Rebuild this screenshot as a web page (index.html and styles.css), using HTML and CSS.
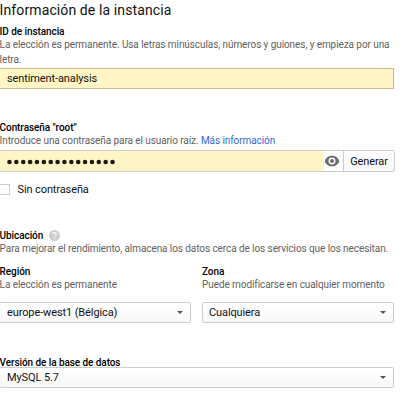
FILE: index.html
```
<!DOCTYPE html>
<html lang="es">
<head>
<meta charset="utf-8">
<title>Información de la instancia</title>
<link rel="stylesheet" href="styles.css">
</head>
<body>
<form class="form">
  <h1 class="title"><span>Información de la instancia</span></h1>

  <section class="field field-id">
    <div class="label">ID de instancia</div>
    <p class="help">La elección es permanente. Usa letras minúsculas, números y guiones, y empieza por una<br>letra.</p>
    <div class="input input-id"><span>sentiment-analysis</span></div>
  </section>

  <section class="field field-password">
    <div class="label label-password">Contraseña "root"</div>
    <p class="help help-password">Introduce una contraseña para el usuario raíz. <a class="link">Más información</a></p>
    <div class="password">
      <div class="password-value">
        <svg class="dots" width="110" height="6" viewBox="0 0 110 6"><path d="M2.5 3H109" fill="none" stroke="#211a12" stroke-width="4.6" stroke-linecap="round" stroke-dasharray="0 6.87"/></svg>
      </div>
      <div class="reveal">
        <svg width="16" height="16" viewBox="0 0 24 24"><path fill="#6b6b6b" d="M12 4C6.500 4 2.500 7.200 1 12c1.500 4.800 5.500 8 11 8s9.500-3.200 11-8c-1.500-4.800-5.500-8-11-8zm0 13.200a5.200 5.200 0 1 1 0-10.400 5.200 5.200 0 0 1 0 10.400zm0-8.200a3 3 0 1 0 0 6 3 3 0 0 0 0-6z"/></svg>
      </div>
      <div class="generate"><span>Generar</span></div>
    </div>
    <div class="check"><span class="box"></span><span class="check-text">Sin contraseña</span></div>
  </section>

  <section class="field field-location">
    <div class="label label-location">Ubicación
      <svg width="11" height="11" viewBox="0 0 11 11"><circle cx="5.500" cy="5.500" r="5.500" fill="#ccc"/><path d="M3.800 4.300C3.800 2 7.200 2.100 7.200 4.200 7.200 5.400 5.500 5.400 5.500 6.800M5.500 7.700V8.900" fill="none" stroke="#fff" stroke-width="1.200"/></svg>
    </div>
    <p class="help help-location">Para mejorar el rendimiento, almacena los datos cerca de los servicios que los necesitan.</p>
    <div class="columns">
      <div class="column">
        <div class="label">Región</div>
        <p class="help">La elección es permanente</p>
        <div class="select"><span>europe-west1 (Bélgica)</span><i class="arrow"></i></div>
      </div>
      <div class="column column-zone">
        <div class="label">Zona</div>
        <p class="help">Puede modificarse en cualquier momento</p>
        <div class="select"><span>Cualquiera</span><i class="arrow"></i></div>
      </div>
    </div>
  </section>

  <section class="field field-version">
    <div class="label label-version">Versión de la base de datos</div>
    <div class="select"><span>MySQL 5.7</span><i class="arrow"></i></div>
  </section>
</form>
</body>
</html>
```
FILE: styles.css
```
* { box-sizing: border-box; }
body {
  margin: 0;
  background: #fff;
  color: #111;
  font-family: Roboto, "Liberation Sans", sans-serif;
  font-size: 11px;
  letter-spacing: -0.11px;
  overflow: hidden;
}
.form { width: 395px; margin-left: -1px; }
.title { margin: 0; height: 25px; font-size: 14px; font-weight: 400; line-height: 20px; letter-spacing: 0.11px; }
.label { height: 12px; font-size: 10px; font-weight: 500; line-height: 13px; letter-spacing: -0.08px; color: #000; white-space: nowrap; }
.title, .label, .help { padding-left: 0.6px; }
.help { margin: 0; font-size: 10px; line-height: 15px; letter-spacing: -0.08px; color: #616161; white-space: nowrap; }
.link { color: #3367d6; }
.input {
  display: flex;
  align-items: center;
  height: 21px;
  margin-top: 1px;
  padding-left: 7px;
  border: 1px solid #d0b48c;
  background: #fff5c5;
}
.field-password { margin-top: 32px; }
.help-password { height: 17px; }
.password { display: flex; width: 396px; height: 22px; border: 1px solid #ccc; border-radius: 2px; }
.password-value { display: flex; align-items: center; flex: 1; padding: 2px 0 0 7px; background: #fff5c5; }
.reveal { display: flex; align-items: center; justify-content: center; width: 19px; padding-right: 3px; }
.generate {
  display: flex;
  align-items: center;
  justify-content: center;
  width: 51px;
  border-left: 1px solid #ccc;
  background: linear-gradient(#fff, #f8f8f8);
}
.check { display: flex; align-items: center; height: 11px; margin-top: 12px; }
.box { width: 11px; height: 11px; border: 1px solid #ccc; }
.check-text { margin-left: 7.5px; }
.field-location { margin-top: 34px; }
.label-location { display: flex; align-items: center; gap: 6px; }
.columns { display: grid; grid-template-columns: 192px 192px; column-gap: 11px; margin-top: 9px; }
.column .help { height: 25px; }
.column-zone .label, .column-zone .help { padding-left: 0; }
.select {
  display: flex;
  align-items: center;
  justify-content: space-between;
  height: 21px;
  padding: 0 7px;
  border: 1px solid #ccc;
  border-radius: 2px;
  background: linear-gradient(#fff, #f8f8f8);
}
.column-zone .select { padding-left: 6px; }
.arrow { border: 3px solid transparent; border-top-color: #555; border-bottom: 0; }
.field-version { margin-top: 32px; }
.label-version { line-height: 15px; }
```
